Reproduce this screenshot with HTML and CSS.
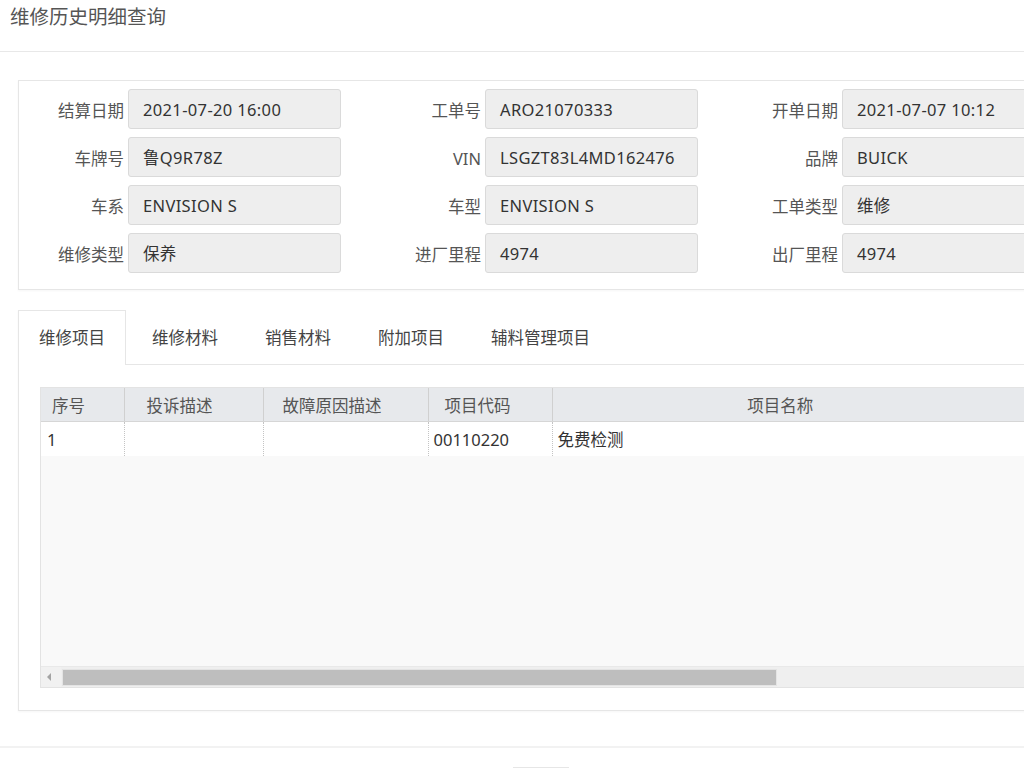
FILE: index.html
```html
<!DOCTYPE html> <!-- HTML5 文件 -->
<html lang="zh-CN">
<head>
  <meta charset="UTF-8">
  <meta name="viewport" content="width=device-width, initial-scale=1.0">
  <title>维修历史明细查询</title>
  <link rel="stylesheet" href="styles.css">
</head>
<body>
  <!-- 頁面標題 -->
  <div class="pageHeader">维修历史明细查询</div>

  <div class="pageBody">
    <!-- 工單基本資料 -->
    <div class="infoPanel">
      <div class="formRow">
        <label class="formLabel">结算日期</label><div class="formInput">2021-07-20 16:00</div>
        <label class="formLabel">工单号</label><div class="formInput">ARO21070333</div>
        <label class="formLabel">开单日期</label><div class="formInput">2021-07-07 10:12</div>
      </div>
      <div class="formRow">
        <label class="formLabel">车牌号</label><div class="formInput">鲁Q9R78Z</div>
        <label class="formLabel">VIN</label><div class="formInput">LSGZT83L4MD162476</div>
        <label class="formLabel">品牌</label><div class="formInput">BUICK</div>
      </div>
      <div class="formRow">
        <label class="formLabel">车系</label><div class="formInput">ENVISION S</div>
        <label class="formLabel">车型</label><div class="formInput">ENVISION S</div>
        <label class="formLabel">工单类型</label><div class="formInput">维修</div>
      </div>
      <div class="formRow">
        <label class="formLabel">维修类型</label><div class="formInput">保养</div>
        <label class="formLabel">进厂里程</label><div class="formInput">4974</div>
        <label class="formLabel">出厂里程</label><div class="formInput">4974</div>
      </div>
    </div>

    <!-- 明細分頁 -->
    <div class="tabPanel">
      <ul class="tabBar">
        <li class="tabItem active">维修项目</li>
        <li class="tabItem">维修材料</li>
        <li class="tabItem">销售材料</li>
        <li class="tabItem">附加项目</li>
        <li class="tabItem">辅料管理项目</li>
      </ul>

      <div class="tabContent">
        <div class="gridView">
          <!-- 表頭 -->
          <div class="gridHead">
            <table class="gridTable">
              <colgroup>
                <col class="colNo"><col class="colComplain"><col class="colCause"><col class="colCode"><col class="colName">
              </colgroup>
              <tr>
                <th class="padNo">序号</th>
                <th class="padComplain">投诉描述</th>
                <th class="padCause">故障原因描述</th>
                <th class="padCode">项目代码</th>
                <th class="headCenter">项目名称</th>
              </tr>
            </table>
          </div>
          <!-- 資料列 -->
          <div class="gridBody">
            <table class="gridTable bodyTable">
              <colgroup>
                <col class="colNo"><col class="colComplain"><col class="colCause"><col class="colCode"><col>
              </colgroup>
              <tr>
                <td>1</td>
                <td></td>
                <td></td>
                <td>00110220</td>
                <td class="lastCell">免费检测</td>
              </tr>
            </table>
          </div>
          <!-- 橫向捲軸 -->
          <div class="gridScroll">
            <div class="scrollBtn"><span class="arrowLeft"></span></div>
            <div class="scrollThumb"></div>
          </div>
        </div>
      </div>
    </div>
  </div>

  <!-- 底部按鈕區 -->
  <div class="pageFooter">
    <span class="footerBtn"></span>
  </div>
</body>
</html>
```

FILE: styles.css
```css
html, body {
  overflow: hidden; /* 不顯示捲軸 */
}
body {
  margin: 0;
  padding: 0;
  background-color: #fff;
  font-family: "Noto Sans", "Noto Sans CJK SC", sans-serif;
  font-size: 16.5px;
  color: #333;
}

.pageHeader {
  height: 52px;
  box-sizing: border-box;
  padding: 3px 10px 0;
  line-height: 28px;
  font-size: 19.5px;
  color: #555;
  border-bottom: 1px solid #e8e8e8;
}

.pageBody {
  padding: 28px 0 0 18px;
}

/* 基本資料卡片 */
.infoPanel {
  width: 1100px;
  border: 1px solid #e6e6e6;
  box-shadow: 0 1px 2px rgba(0, 0, 0, 0.04);
  padding: 8px 0 16px;
  display: flex;
  flex-direction: column;
  gap: 8px;
}
.formRow {
  display: flex;
  align-items: center;
}
.formLabel {
  width: 105px;
  margin-right: 4px;
  padding-top: 2px;
  text-align: right;
  color: #555;
  white-space: nowrap;
}
.formLabel:not(:first-child) {
  margin-left: 35px;
}
.formInput {
  width: 213px;
  height: 40px;
  box-sizing: border-box;
  padding: 1px 14px 0;
  line-height: 37px;
  letter-spacing: 0.35px;
  background-color: #eee;
  border: 1px solid #dadada;
  border-radius: 3px;
  color: #333;
  white-space: nowrap;
}

/* 分頁卡片 */
.tabPanel {
  width: 1100px;
  margin-top: 20px;
  border: 1px solid #e6e6e6;
  border-top: none;
  box-shadow: 0 1px 2px rgba(0, 0, 0, 0.04);
}
.tabBar {
  list-style: none;
  margin: 0 0 0 -1px;
  padding: 0;
  display: flex;
  border-bottom: 1px solid #e6e6e6;
}
.tabItem {
  padding: 0 20px;
  margin-right: 5px;
  line-height: 53px;
  border: 1px solid transparent;
  border-bottom: none;
  margin-bottom: -1px;
  color: #444;
  cursor: pointer;
}
.tabItem.active {
  border-color: #e6e6e6;
  background-color: #fff;
  padding-bottom: 1px;
}

.tabContent {
  padding: 22px 0 22px 21px;
}

/* 表格 */
.gridView {
  border: 1px solid #e3e3e3;
  border-right: none;
  background-color: #f9f9f9;
  height: 301px;
  box-sizing: border-box;
  display: flex;
  flex-direction: column;
}
.gridTable {
  border-collapse: collapse;
  table-layout: fixed;
  width: 967px;
}
.bodyTable {
  width: 100%;
}
.colNo { width: 83px; }
.colComplain { width: 139px; }
.colCause { width: 165px; }
.colCode { width: 124px; }
.colName { width: 456px; }

.gridHead {
  background-color: #e7e9ec;
  border-bottom: 1px solid #d6d6d6;
}
.gridHead th {
  height: 33px;
  padding: 0;
  font-weight: normal;
  color: #555;
  text-align: left;
  border-right: 1px solid #d0d0d0;
  white-space: nowrap;
}
.gridHead th:last-child {
  border-right: none;
}
.padNo { padding-left: 11px !important; }
.padComplain { padding-left: 22px !important; }
.padCause { padding-left: 19px !important; }
.padCode { padding-left: 16px !important; }
.headCenter { text-align: center !important; }

.gridBody {
  flex: 1;
}
.gridBody td {
  height: 34px;
  padding: 0 5px;
  background-color: #fff;
  border-right: 1px dotted #c4c4c4;
  white-space: nowrap;
  color: #333;
}
.gridBody td:first-child {
  padding-left: 6px;
}
.gridBody td.lastCell {
  border-right: none;
}

/* 捲軸 */
.gridScroll {
  height: 20px;
  background-color: #efefef;
  border-top: 1px solid #e9e9e9;
  display: flex;
  align-items: center;
}
.scrollBtn {
  width: 20px;
  height: 20px;
  background-color: #f1f1f1;
  display: flex;
  align-items: center;
  justify-content: center;
}
.arrowLeft {
  width: 0;
  height: 0;
  border-top: 4px solid transparent;
  border-bottom: 4px solid transparent;
  border-right: 4px solid #a3a3a3;
  margin-left: -4px;
}
.scrollThumb {
  width: 715px;
  height: 17px;
  margin-left: 1px;
  background-color: #bebebe;
  border: 1px solid #e4e4e4;
  box-sizing: border-box;
}

.pageFooter {
  margin-top: 35px;
  border-top: 2px solid #f2f2f2;
  padding-top: 19px;
  display: flex;
  justify-content: center;
}
.footerBtn {
  display: inline-block;
  width: 56px;
  height: 30px;
  margin-left: 58px;
  border-top: 1px solid #e6e6e6;
}
```
